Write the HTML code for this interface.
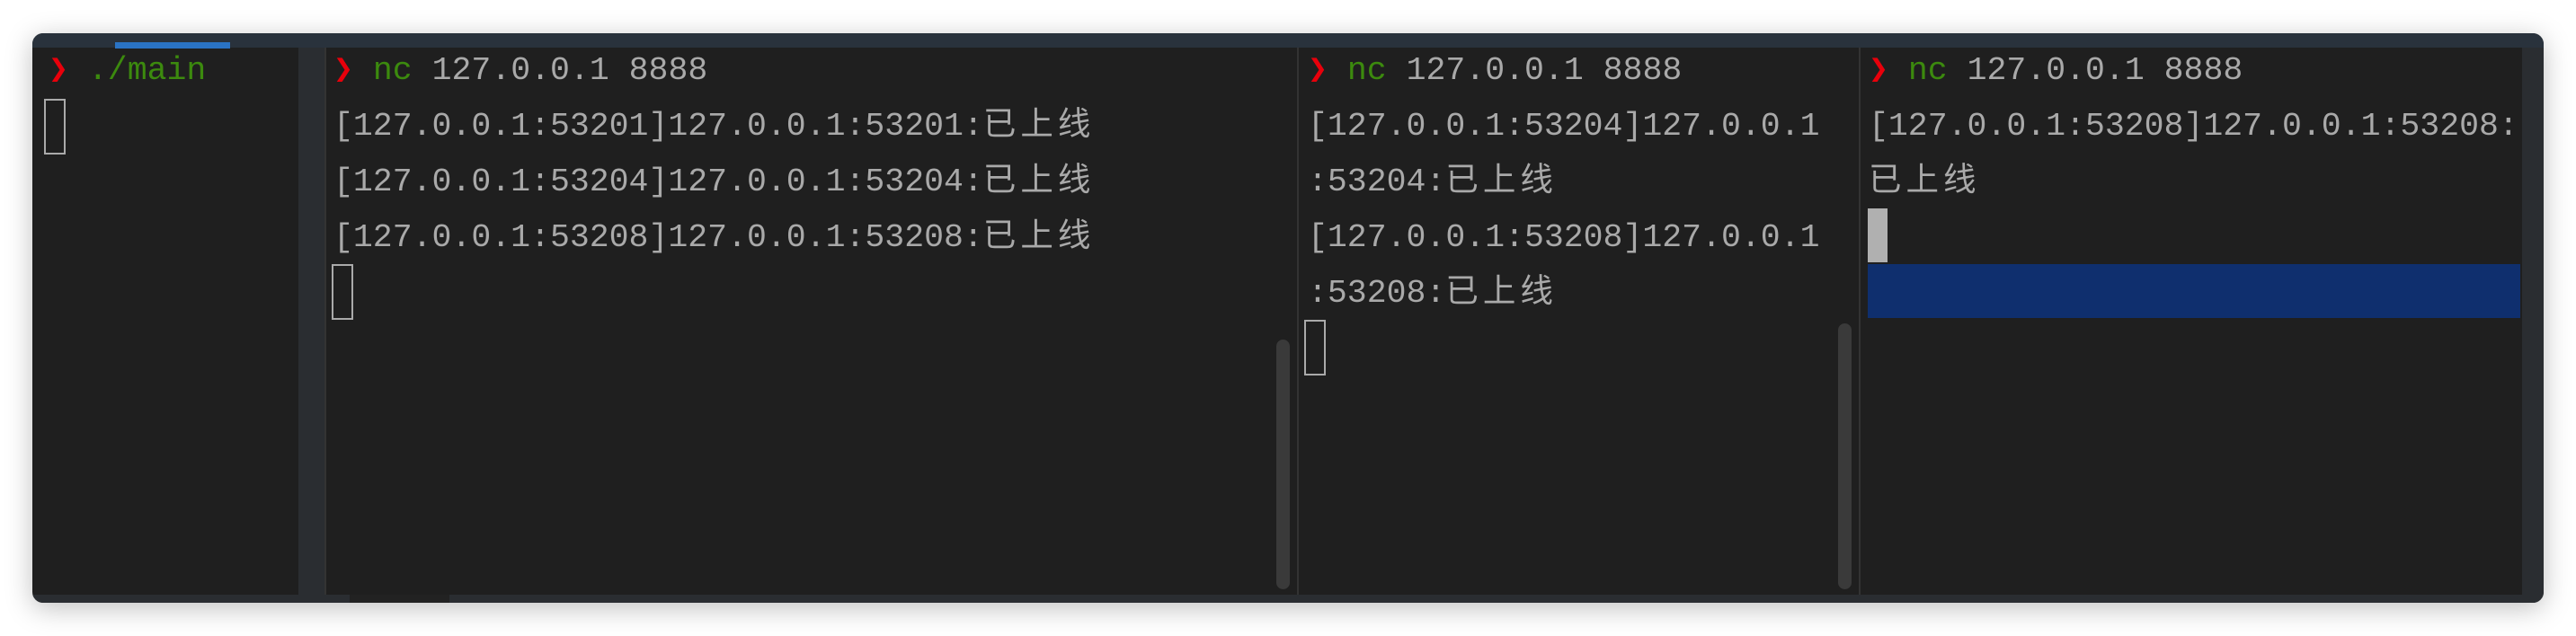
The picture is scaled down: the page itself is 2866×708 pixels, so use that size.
<!DOCTYPE html>
<html><head><meta charset="utf-8"><style>
body{margin:0;width:2866px;height:708px;background:#fff;position:relative;overflow:hidden;font-family:"Liberation Mono","Noto Sans CJK SC",monospace;}
.win{position:absolute;left:36px;top:37px;width:2794px;height:634px;background:#1f1f1f;border-radius:12px;box-shadow:0 6px 30px rgba(0,0,0,.25);overflow:hidden}
.abs{position:absolute}
.t{position:absolute;font-size:36.5px;line-height:62px;color:#a9a9a9;white-space:pre}
.g{color:#3c8a0e}.r{color:#e8000b}
.c{letter-spacing:5px}
</style></head><body>
<div class="win">
<div class="abs" style="left:0;top:0;width:2794px;height:16px;background:#29323c"></div>
<div class="abs" style="left:92px;top:10px;width:128px;height:7px;background:#2a73c4"></div>
<div class="abs" style="left:296px;top:16px;width:29px;height:610px;background:#2a2d31"></div>
<div class="abs" style="left:325px;top:16px;width:2px;height:610px;background:#333"></div>
<div class="abs" style="left:1407px;top:16px;width:2px;height:610px;background:#333"></div>
<div class="abs" style="left:2032px;top:16px;width:2px;height:610px;background:#333"></div>
<div class="abs" style="left:2770px;top:16px;width:24px;height:618px;background:#2a2d31"></div>
<div class="abs" style="left:0;top:625px;width:2794px;height:9px;background:#2a2d31"></div>
<div class="abs" style="left:353px;top:625px;width:111px;height:9px;background:#222"></div>
<div class="abs" style="left:1384px;top:341px;width:15px;height:278px;background:#3a3a3a;border-radius:8px"></div>
<div class="abs" style="left:2009px;top:323px;width:15px;height:296px;background:#3a3a3a;border-radius:8px"></div>

<div class="t" style="left:18px;top:11px"><span class="r">❯</span> <span class="g">./main</span></div>
<div class="abs" style="left:13px;top:73px;width:20px;height:58px;border:2px solid #aaa"></div>

<div class="t" style="left:335px;top:11px"><span class="r">❯</span> <span class="g">nc</span> 127.0.0.1 8888
[127.0.0.1:53201]127.0.0.1:53201:<span class="c">已上线</span>
[127.0.0.1:53204]127.0.0.1:53204:<span class="c">已上线</span>
[127.0.0.1:53208]127.0.0.1:53208:<span class="c">已上线</span></div>
<div class="abs" style="left:333px;top:257px;width:20px;height:58px;border:2px solid #aaa"></div>

<div class="t" style="left:1419px;top:11px"><span class="r">❯</span> <span class="g">nc</span> 127.0.0.1 8888
[127.0.0.1:53204]127.0.0.1
:53204:<span class="c">已上线</span>
[127.0.0.1:53208]127.0.0.1
:53208:<span class="c">已上线</span></div>
<div class="abs" style="left:1415px;top:319px;width:20px;height:58px;border:2px solid #aaa"></div>

<div class="t" style="left:2043px;top:11px"><span class="r">❯</span> <span class="g">nc</span> 127.0.0.1 8888
[127.0.0.1:53208]127.0.0.1:53208:
<span class="c">已上线</span></div>
<div class="abs" style="left:2042px;top:195px;width:22px;height:60px;background:#b0b0b0"></div>
<div class="abs" style="left:2042px;top:257px;width:726px;height:60px;background:#0f2f6e"></div>
</div>
</body></html>
